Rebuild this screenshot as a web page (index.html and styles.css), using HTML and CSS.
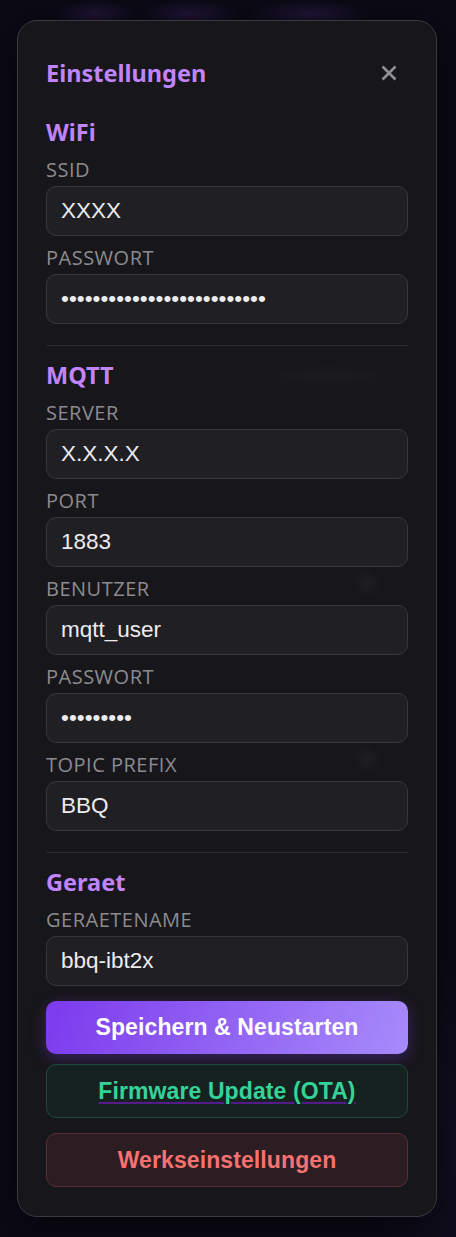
FILE: index.html
```html
<!DOCTYPE html>
<html lang="de">
<head>
<meta charset="utf-8">
<title>Einstellungen</title>
<link rel="stylesheet" href="styles.css">
</head>
<body>
<div class="panel">
  <div class="head">
    <h2 class="title">Einstellungen</h2>
    <button class="close" aria-label="Schließen">
      <svg width="16" height="16" viewBox="0 0 16 16"><path d="M1.5 1.5 L14.5 14.5 M14.5 1.5 L1.5 14.5" stroke="#8f8f94" stroke-width="2.6" stroke-linecap="butt" fill="none"/></svg>
    </button>
  </div>

  <section class="sec first">
    <h3 class="sec-title">WiFi</h3>
    <div class="field"><label class="lbl">SSID</label><input class="inp" type="text" value="XXXX"></div>
    <div class="field"><label class="lbl">PASSWORT</label><input class="inp" type="password" value="abcdefghijklmnopqrstuvwxyz"></div>
  </section>

  <hr class="divider">

  <section class="sec">
    <h3 class="sec-title">MQTT</h3>
    <div class="field"><label class="lbl">SERVER</label><input class="inp" type="text" value="X.X.X.X"></div>
    <div class="field"><label class="lbl">PORT</label><input class="inp" type="text" value="1883"></div>
    <div class="field"><label class="lbl">BENUTZER</label><input class="inp" type="text" value="mqtt_user"></div>
    <div class="field"><label class="lbl">PASSWORT</label><input class="inp" type="password" value="abcdefghi"></div>
    <div class="field"><label class="lbl">TOPIC PREFIX</label><input class="inp" type="text" value="BBQ"></div>
  </section>

  <hr class="divider">

  <section class="sec">
    <h3 class="sec-title">Geraet</h3>
    <div class="field"><label class="lbl">GERAETENAME</label><input class="inp" type="text" value="bbq-ibt2x"></div>
  </section>

  <button class="btn save">Speichern &amp; Neustarten</button>
  <a class="btn ota" href="#"><span>Firmware Update (OTA)</span></a>
  <button class="btn reset">Werkseinstellungen</button>
</div>
</body>
</html>
```

FILE: styles.css
```css
* { box-sizing: border-box; }

html, body {
  margin: 0;
  padding: 0;
}

body {
  width: 456px;
  min-height: 1237px;
  background-color: #0b0a15;
  background-image:
    radial-gradient(ellipse 40px 14px at 95px 14px, rgba(70, 40, 120, 0.35), transparent),
    radial-gradient(ellipse 50px 14px at 190px 14px, rgba(70, 40, 120, 0.35), transparent),
    radial-gradient(ellipse 60px 14px at 310px 14px, rgba(70, 40, 120, 0.35), transparent),
    radial-gradient(ellipse 120px 200px at 470px 1150px, rgba(40, 30, 70, 0.25), transparent);
  font-family: "Open Sans", "Noto Sans", sans-serif;
  padding: 20px 0 21px 17px;
}

.panel {
  width: 420px;
  border: 1px solid #3a393f;
  border-radius: 20px;
  background-color: #17161a;
  background-image:
    radial-gradient(ellipse 70px 12px at 310px 355px, rgba(255, 255, 255, 0.025), transparent),
    radial-gradient(circle 14px at 349px 562px, rgba(255, 255, 255, 0.035), transparent),
    radial-gradient(circle 14px at 349px 738px, rgba(255, 255, 255, 0.035), transparent);
  box-shadow: 0 10px 40px rgba(0, 0, 0, 0.5);
  padding: 38px 28px 29px 28px;
  display: flex;
  flex-direction: column;
}

.head {
  display: flex;
  justify-content: space-between;
  align-items: center;
  height: 28px;
}

.title {
  margin: 0;
  font-family: "Noto Sans", "Open Sans", sans-serif;
  font-weight: 700;
  font-size: 23.5px;
  line-height: 28px;
  color: #c084fc;
}

.close {
  background: none;
  border: none;
  padding: 0;
  margin: 0 11px 0 0;
  width: 16px;
  height: 16px;
  display: flex;
  cursor: pointer;
}

.sec {
  display: flex;
  flex-direction: column;
  gap: 10px;
}

.sec.first {
  margin-top: 31px;
}

.sec-title {
  margin: 0 0 2px 0;
  font-family: "Noto Sans", "Open Sans", sans-serif;
  font-weight: 700;
  font-size: 23.5px;
  line-height: 28px;
  color: #c084fc;
}

.field {
  display: flex;
  flex-direction: column;
  gap: 4px;
}

.lbl {
  font-size: 20px;
  line-height: 24px;
  letter-spacing: 0.5px;
  color: #8c8b91;
}

.inp {
  width: 100%;
  height: 50px;
  border: 1px solid #38373d;
  border-radius: 10px;
  background: #201f24;
  color: #ececf0;
  font-family: "Liberation Sans", Arial, sans-serif;
  font-size: 22.5px;
  padding: 0 14px;
  outline: none;
}

.divider {
  border: none;
  height: 1px;
  background: #2b2a2f;
  margin: 21px 0 15px 0;
  width: 100%;
}

.btn {
  display: flex;
  align-items: center;
  justify-content: center;
  width: 100%;
  border-radius: 10px;
  font-family: "Liberation Sans", Arial, sans-serif;
  font-weight: 700;
  font-size: 23px;
  letter-spacing: 0.1px;
  cursor: pointer;
}

.save {
  height: 53px;
  margin-top: 15px;
  border: none;
  color: #ffffff;
  background: linear-gradient(110deg, #7c3aed 0%, #a78bfa 100%);
  box-shadow: 0 4px 16px rgba(124, 58, 237, 0.35);
}

.ota {
  height: 54px;
  margin-top: 10px;
  border: 1px solid #1e4a3b;
  background: #15221f;
  color: #551a8b;
  text-decoration: underline;
  text-decoration-color: #551a8b;
  text-decoration-thickness: 1.5px;
  text-underline-offset: 3px;
}

.ota span {
  color: #34d399;
}

.reset {
  height: 54px;
  margin-top: 15px;
  border: 1px solid #5a2e34;
  background: #2b1d21;
  color: #f87171;
}
```
